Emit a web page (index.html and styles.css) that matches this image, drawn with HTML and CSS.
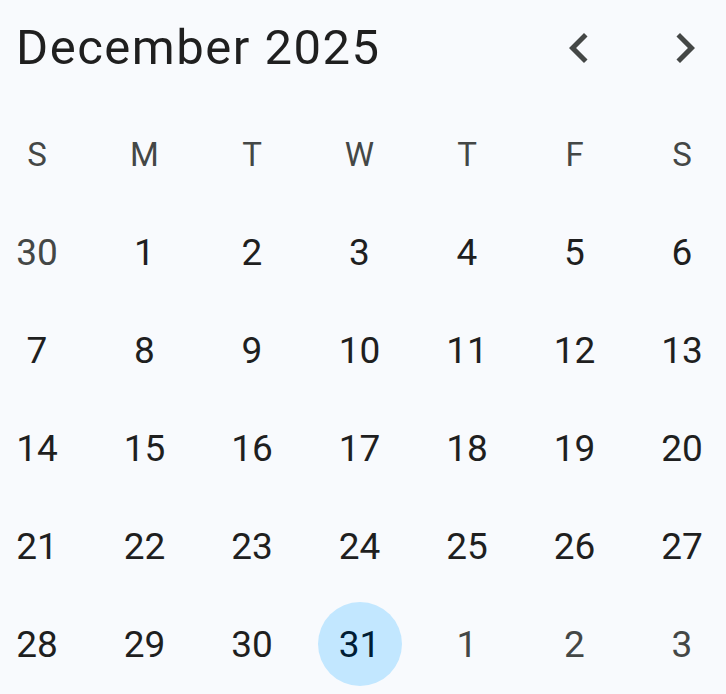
FILE: index.html
```html
<!DOCTYPE html>
<html lang="en">
<head>
<meta charset="utf-8">
<title>December 2025</title>
<link rel="stylesheet" href="styles.css">
</head>
<body>
<div class="calendar">
  <div class="header">
    <div class="title">December 2025</div>
    <div class="nav">
      <button class="nav-btn" aria-label="Previous month">
        <svg viewBox="0 0 24 24" width="60" height="60"><path d="M15.41 7.41L14 6l-6 6 6 6 1.41-1.41L10.83 12z"/></svg>
      </button>
      <button class="nav-btn" aria-label="Next month">
        <svg viewBox="0 0 24 24" width="60" height="60"><path d="M8.59 16.59L10 18l6-6-6-6-1.41 1.41L13.17 12z"/></svg>
      </button>
    </div>
  </div>
  <div class="grid">
    <div class="wd">S</div><div class="wd">M</div><div class="wd">T</div><div class="wd">W</div><div class="wd">T</div><div class="wd">F</div><div class="wd">S</div>
    <div class="day other">30</div><div class="day">1</div><div class="day">2</div><div class="day">3</div><div class="day">4</div><div class="day">5</div><div class="day">6</div>
    <div class="day">7</div><div class="day">8</div><div class="day">9</div><div class="day">10</div><div class="day">11</div><div class="day">12</div><div class="day">13</div>
    <div class="day">14</div><div class="day">15</div><div class="day">16</div><div class="day">17</div><div class="day">18</div><div class="day">19</div><div class="day">20</div>
    <div class="day">21</div><div class="day">22</div><div class="day">23</div><div class="day">24</div><div class="day">25</div><div class="day">26</div><div class="day">27</div>
    <div class="day">28</div><div class="day">29</div><div class="day">30</div><div class="day"><span class="today">31</span></div><div class="day other">1</div><div class="day other">2</div><div class="day other">3</div>
  </div>
</div>
</body>
</html>
```
FILE: styles.css
```css
html, body {
  margin: 0;
  padding: 0;
  background: #f8fafd;
}
body {
  font-family: Roboto, "Open Sans", sans-serif;
  color: #1f1f1f;
  width: 726px;
  height: 694px;
  overflow: hidden;
}
.calendar {
  display: flex;
  flex-direction: column;
}
.header {
  height: 95px;
  display: flex;
  align-items: center;
  justify-content: space-between;
  padding: 0 11px 10px 16px;
}
.title {
  font-size: 49px;
  font-weight: 400;
  letter-spacing: 1.5px;
  color: #1f1f1f;
}
.nav {
  display: flex;
  gap: 46px;
}
.nav-btn {
  width: 60px;
  height: 60px;
  padding: 0;
  border: 0;
  background: transparent;
  display: flex;
  align-items: center;
  justify-content: center;
}
.nav-btn svg {
  fill: #444746;
  display: block;
}
.grid {
  display: grid;
  grid-template-columns: repeat(7, 74px);
  column-gap: 33.5px;
  grid-auto-rows: 98px;
}
.wd {
  display: flex;
  align-items: center;
  justify-content: center;
  font-size: 33px;
  color: #444746;
}
.day {
  display: flex;
  align-items: center;
  justify-content: center;
  font-size: 37px;
  color: #1f1f1f;
}
.day.other {
  color: #444746;
}
.today {
  flex: none;
  width: 84px;
  height: 84px;
  border-radius: 50%;
  background: #c2e7ff;
  color: #001d35;
  display: flex;
  align-items: center;
  justify-content: center;
}
```
